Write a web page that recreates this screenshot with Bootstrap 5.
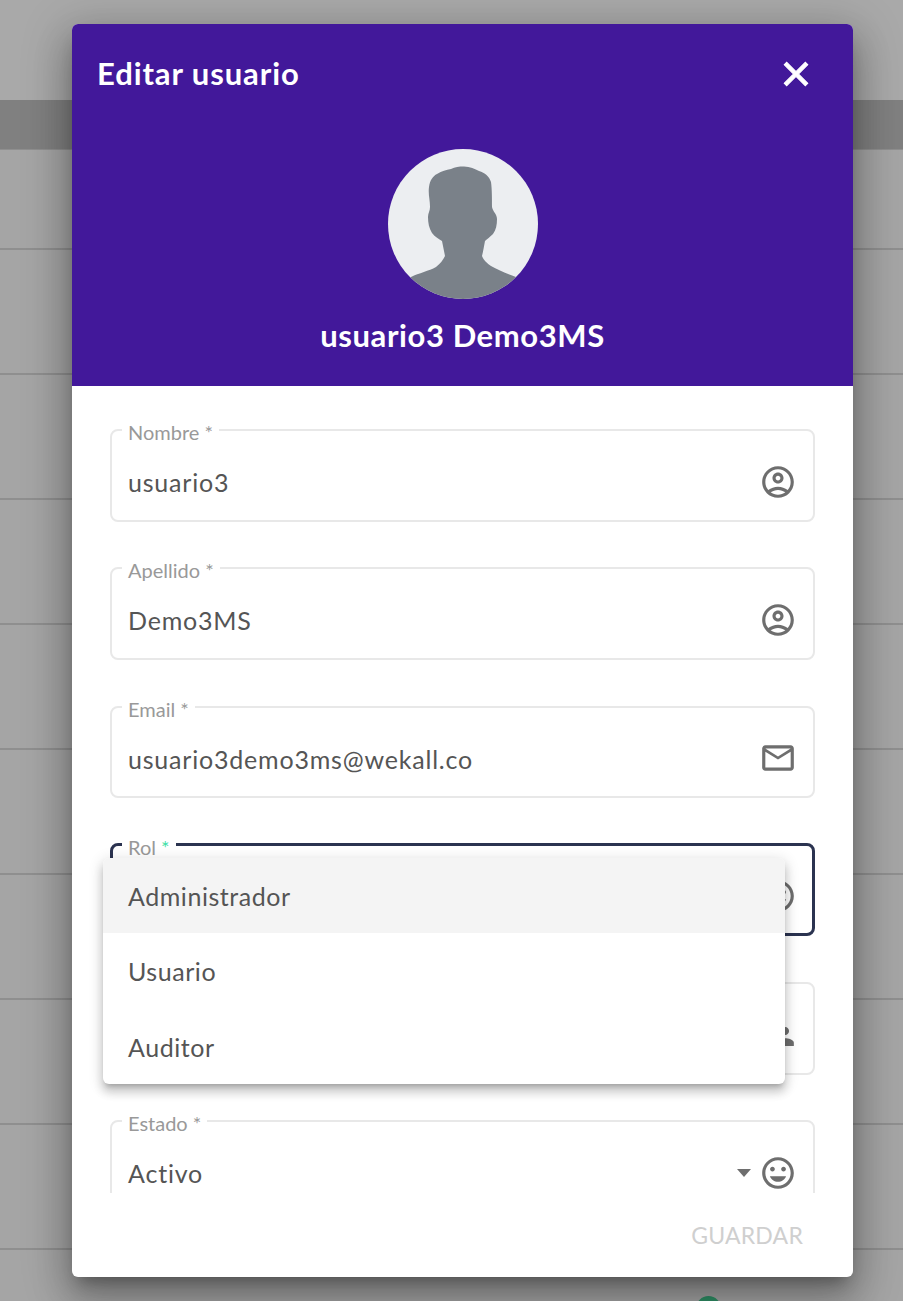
<!DOCTYPE html>
<html lang="es">
<head>
<meta charset="utf-8">
<title>Editar usuario</title>
<link rel="stylesheet" href="https://cdn.jsdelivr.net/npm/bootstrap@5.3.0/dist/css/bootstrap.min.css">
<style>
html,body{height:1301px;overflow:hidden;}
body{background:#a5a5a5;font-family:Lato,"Noto Sans",sans-serif;color:#555;}
.pg-top{height:100px;background:#a9a9a9;}
.pg-band{height:50px;background:#808080;border-bottom:1px solid #8f8f8f;}
.pg-row{height:125px;border-bottom:2px solid #8f8f8f;}
.pg-row-first{height:100px;}
.pg-last{padding:46px 0 0 696px;}
.pg-dot{width:25px;height:25px;border-radius:50%;background:#2f9066;}
.dlg-wrap{position:absolute;top:24px;left:72px;width:781px;height:1253px;}
.dlg{height:100%;border:0;border-radius:6px;overflow:hidden;display:flex;flex-direction:column;background:#fff;box-shadow:0 11px 15px -7px rgba(0,0,0,.3),0 24px 38px 3px rgba(0,0,0,.2),0 9px 46px 8px rgba(0,0,0,.18);}
.dlg-head{background:#42189a;color:#fff;height:362px;flex:none;padding:0;display:block;border:0;border-radius:0;}
.dlg-title-row{padding:25px 37px 0 25px;height:125px;}
.dlg-title{font-size:31px;font-weight:700;line-height:48px;margin:0;letter-spacing:.9px;}
.dlg-close{background:none;border:0;padding:0;width:40px;height:40px;margin-top:5px;color:#fff;display:block;}
.dlg-close svg{stroke:currentColor;stroke-width:.7;}
.dlg-avatar{width:150px;height:150px;display:block;}
.dlg-name{font-size:31px;font-weight:700;margin-top:16px;line-height:40px;letter-spacing:.6px;}
.dlg-body{flex:1 1 auto;min-height:0;overflow:hidden;padding:30px 38px 0;}
.fld{border:2px solid #e8e8e8;border-radius:8px;height:105.5px;padding:0 20px 0 16px;margin:0 0 32.8px;min-width:0;}
.fld legend{float:none;width:auto;font-size:20px;line-height:24px;padding:4px 6px 0;margin:0 0 0 -6px;color:#999;}
.fld-active{border:3px solid #2b3350;padding-left:15px;}
.fld-active legend{margin-left:-6px;}
.fld-active .fld-row{margin-right:-1px;}
.req{color:#3fe0a8;}
.fld-row{height:100%;}
.fld-val{font-size:25px;color:#555;letter-spacing:.8px;padding-top:2px;}
.fld-ico{width:38px;height:38px;fill:#6e6e6e;flex:none;margin-right:-4px;}
.fld-arrow{width:0;height:0;border-left:7.5px solid transparent;border-right:7.5px solid transparent;border-top:8px solid #6e6e6e;margin-right:8px;}
.dlg-foot{flex:none;height:84px;padding:0 50px 0 0;border:0;}
.btn-save{font-size:23px;color:#cfcfcf;background:none;border:0;padding:0;letter-spacing:.2px;}
.opt-menu{position:absolute;left:31px;top:834px;width:682px;background:#fff;border:0;border-radius:6px;padding:0;box-shadow:0 5px 5px -3px rgba(0,0,0,.2),0 8px 10px 1px rgba(0,0,0,.14),0 3px 14px 2px rgba(0,0,0,.12);overflow:hidden;}
.opt-menu .dropdown-item{height:75.4px;line-height:77px;padding:0 25px;font-size:25px;color:#555;letter-spacing:.55px;}
.opt-menu .dropdown-item.act{background:#f4f4f4;}
</style>
</head>
<body>
<div class="pg-top"></div>
<div class="pg-band"></div>
<div class="pg-row pg-row-first"></div>
<div class="pg-row"></div>
<div class="pg-row"></div>
<div class="pg-row"></div>
<div class="pg-row"></div>
<div class="pg-row"></div>
<div class="pg-row"></div>
<div class="pg-row"></div>
<div class="pg-row"></div>
<div class="pg-last"><div class="pg-dot"></div></div>

<div class="dlg-wrap">
  <div class="modal-content dlg">
    <div class="modal-header dlg-head">
      <div class="d-flex justify-content-between align-items-start dlg-title-row">
        <h5 class="dlg-title">Editar usuario</h5>
        <button type="button" class="dlg-close" aria-label="Cerrar">
          <svg viewBox="0 0 24 24" width="40" height="40" fill="currentColor"><path d="M19 6.41L17.59 5 12 10.59 6.41 5 5 6.41 10.59 12 5 17.59 6.41 19 12 13.41 17.59 19 19 17.59 13.41 12z"/></svg>
        </button>
      </div>
      <div class="d-flex flex-column align-items-center">
        <svg class="dlg-avatar" viewBox="0 0 150 150">
          <defs><clipPath id="av"><circle cx="75" cy="75" r="75"/></clipPath></defs>
          <circle cx="75" cy="75" r="75" fill="#eceef1"/>
          <path clip-path="url(#av)" fill="#7a8189" d="M76 17.5C82 17.5 87 20 91 22C97 24 101 27 103 33C104 40 104 50 104 58C105 63 109 65 109 70C109 76 108 81 105 85C102 88 99 90 97 92C96 97 95 103 94 107C96 112 99 114 103 117C110 121 120 125 128 128L128 150L23 150L23 128C31 124 41 122 48 118C52 115 55 111 57 107C56 102 55 97 54 92C51 90 47 88 44 84C41 79 40 74 40 68C40 64 42 62 42 58C42 51 40 45 41 38C42 31 45 27 49 25C54 22 58 21 63 20C67 18 71 17.5 76 17.5Z"/>
        </svg>
        <div class="dlg-name">usuario3 Demo3MS</div>
      </div>
    </div>
    <div class="modal-body dlg-body">
      <fieldset class="fld">
        <legend>Nombre *</legend>
        <div class="d-flex align-items-center justify-content-between fld-row">
          <span class="fld-val">usuario3</span>
          <svg class="fld-ico" viewBox="0 0 24 24"><path d="M12 2C6.48 2 2 6.48 2 12s4.48 10 10 10 10-4.48 10-10S17.52 2 12 2zM7.35 18.5C8.66 17.56 10.26 17 12 17s3.34.56 4.65 1.5c-1.31.94-2.91 1.5-4.65 1.5s-3.34-.56-4.65-1.5zm10.79-1.38C16.45 15.8 14.32 15 12 15s-4.45.8-6.14 2.12C4.7 15.73 4 13.95 4 12c0-4.42 3.58-8 8-8s8 3.58 8 8c0 1.95-.7 3.73-1.86 5.12zM12 6c-1.93 0-3.5 1.57-3.5 3.5S10.07 13 12 13s3.5-1.57 3.5-3.5S13.93 6 12 6zm0 5c-.83 0-1.5-.67-1.5-1.5S11.17 8 12 8s1.5.67 1.5 1.5S12.83 11 12 11z"/></svg>
        </div>
      </fieldset>
      <fieldset class="fld">
        <legend>Apellido *</legend>
        <div class="d-flex align-items-center justify-content-between fld-row">
          <span class="fld-val">Demo3MS</span>
          <svg class="fld-ico" viewBox="0 0 24 24"><path d="M12 2C6.48 2 2 6.48 2 12s4.48 10 10 10 10-4.48 10-10S17.52 2 12 2zM7.35 18.5C8.66 17.56 10.26 17 12 17s3.34.56 4.65 1.5c-1.31.94-2.91 1.5-4.65 1.5s-3.34-.56-4.65-1.5zm10.79-1.38C16.45 15.8 14.32 15 12 15s-4.45.8-6.14 2.12C4.7 15.73 4 13.95 4 12c0-4.42 3.58-8 8-8s8 3.58 8 8c0 1.95-.7 3.73-1.86 5.12zM12 6c-1.93 0-3.5 1.57-3.5 3.5S10.07 13 12 13s3.5-1.57 3.5-3.5S13.93 6 12 6zm0 5c-.83 0-1.5-.67-1.5-1.5S11.17 8 12 8s1.5.67 1.5 1.5S12.83 11 12 11z"/></svg>
        </div>
      </fieldset>
      <fieldset class="fld">
        <legend>Email *</legend>
        <div class="d-flex align-items-center justify-content-between fld-row">
          <span class="fld-val">usuario3demo3ms@wekall.co</span>
          <svg class="fld-ico" viewBox="0 0 24 24"><path d="M20 4H4c-1.1 0-1.99.9-1.99 2L2 18c0 1.1.9 2 2 2h16c1.1 0 2-.9 2-2V6c0-1.1-.9-2-2-2zm0 14H4V8l8 5 8-5v10zm-8-7L4 6h16l-8 5z"/></svg>
        </div>
      </fieldset>
      <fieldset class="fld fld-active">
        <legend>Rol <span class="req">*</span></legend>
        <div class="d-flex align-items-center justify-content-end fld-row">
          <svg class="fld-ico" viewBox="0 0 24 24"><path d="M11.99 2C6.47 2 2 6.48 2 12s4.47 10 9.99 10C17.52 22 22 17.52 22 12S17.52 2 11.99 2zM12 20c-4.42 0-8-3.58-8-8s3.58-8 8-8 8 3.58 8 8-3.58 8-8 8zm3.5-9c.83 0 1.5-.67 1.5-1.5S16.33 8 15.5 8 14 8.67 14 9.5s.67 1.5 1.5 1.5zm-7 0c.83 0 1.5-.67 1.5-1.5S9.33 8 8.5 8 7 8.67 7 9.5 7.67 11 8.5 11zm3.5 6.5c2.33 0 4.31-1.46 5.11-3.5H6.89c.8 2.04 2.78 3.5 5.11 3.5z"/></svg>
        </div>
      </fieldset>
      <fieldset class="fld">
        <legend>&nbsp;</legend>
        <div class="d-flex align-items-center justify-content-end fld-row">
          <svg class="fld-ico" viewBox="0 0 24 24"><path d="M16.5 12c1.38 0 2.49-1.12 2.49-2.5S17.88 7 16.5 7 14 8.12 14 9.5s1.12 2.5 2.5 2.5zM9 11c1.66 0 2.99-1.34 2.99-3S10.66 5 9 5 6 6.34 6 8s1.34 3 3 3zm7.5 3c-1.83 0-5.5.92-5.5 2.75V19h11v-2.25c0-1.83-3.67-2.75-5.5-2.75zM9 13c-2.33 0-7 1.17-7 3.5V19h7v-2.25c0-.85.33-2.34 2.37-3.47C10.5 13.1 9.66 13 9 13z"/></svg>
        </div>
      </fieldset>
      <fieldset class="fld">
        <legend>Estado *</legend>
        <div class="d-flex align-items-center fld-row">
          <span class="fld-val me-auto">Activo</span>
          <span class="fld-arrow"></span>
          <svg class="fld-ico" viewBox="0 0 24 24"><path d="M11.99 2C6.47 2 2 6.48 2 12s4.47 10 9.99 10C17.52 22 22 17.52 22 12S17.52 2 11.99 2zM12 20c-4.42 0-8-3.58-8-8s3.58-8 8-8 8 3.58 8 8-3.58 8-8 8zm3.5-9c.83 0 1.5-.67 1.5-1.5S16.33 8 15.5 8 14 8.67 14 9.5s.67 1.5 1.5 1.5zm-7 0c.83 0 1.5-.67 1.5-1.5S9.33 8 8.5 8 7 8.67 7 9.5 7.67 11 8.5 11zm3.5 6.5c2.33 0 4.31-1.46 5.11-3.5H6.89c.8 2.04 2.78 3.5 5.11 3.5z"/></svg>
        </div>
      </fieldset>
    </div>
    <div class="modal-footer dlg-foot justify-content-end align-items-center">
      <button type="button" class="btn-save" disabled>GUARDAR</button>
    </div>
  </div>
  <ul class="dropdown-menu d-block opt-menu">
    <li><a class="dropdown-item act" href="#">Administrador</a></li>
    <li><a class="dropdown-item" href="#">Usuario</a></li>
    <li><a class="dropdown-item" href="#">Auditor</a></li>
  </ul>
</div>
</body>
</html>
